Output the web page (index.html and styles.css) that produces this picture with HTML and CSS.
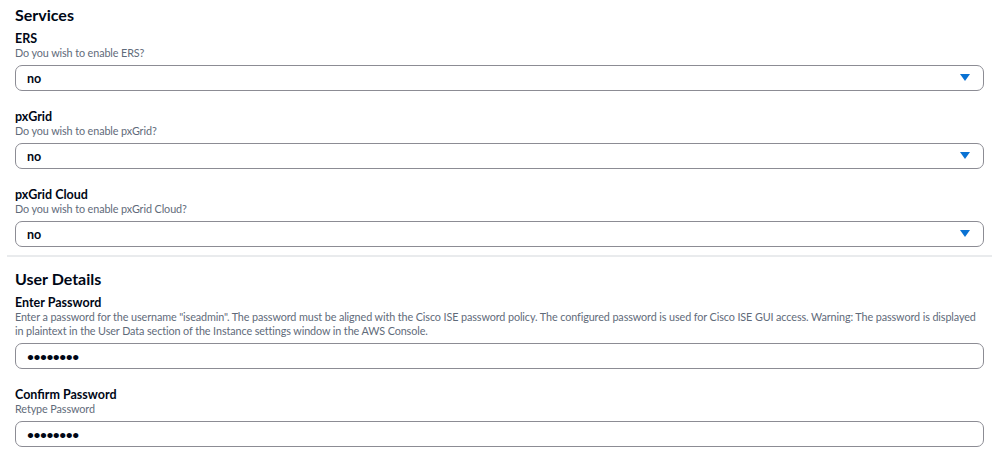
FILE: index.html
```html
<!doctype html>
<html lang="en">
<head>
    <meta charset="UTF-8">
    <title>Instance Settings</title>
    <link rel="stylesheet" href="styles.css">
</head>
<body>
    <div id='contents'>

        <div class='section'>
            <h2 class='sectionTitle'>Services</h2>

            <div class='field'>
                <div class='fieldLabel'>ERS</div>
                <div class='fieldHint'>Do you wish to enable ERS?</div>
                <div class='selectBox'>
                    <span class='selectValue'>no</span>
                    <svg class='caret' width='10' height='8' viewBox='0 0 10 8'><path d='M0 0 H10 L5 7 Z' fill='#0972d3'/></svg>
                </div>
            </div>

            <div class='field'>
                <div class='fieldLabel'>pxGrid</div>
                <div class='fieldHint'>Do you wish to enable pxGrid?</div>
                <div class='selectBox'>
                    <span class='selectValue'>no</span>
                    <svg class='caret' width='10' height='8' viewBox='0 0 10 8'><path d='M0 0 H10 L5 7 Z' fill='#0972d3'/></svg>
                </div>
            </div>

            <div class='field'>
                <div class='fieldLabel'>pxGrid Cloud</div>
                <div class='fieldHint'>Do you wish to enable pxGrid Cloud?</div>
                <div class='selectBox'>
                    <span class='selectValue'>no</span>
                    <svg class='caret' width='10' height='8' viewBox='0 0 10 8'><path d='M0 0 H10 L5 7 Z' fill='#0972d3'/></svg>
                </div>
            </div>
        </div>

        <div class='section divided'>
            <h2 class='sectionTitle'>User Details</h2>

            <div class='field'>
                <div class='fieldLabel'>Enter Password</div>
                <div class='fieldHint'>Enter a password for the username "iseadmin". The password must be aligned with the Cisco ISE password policy. The configured password is used for Cisco ISE GUI access. Warning: The password is displayed in plaintext in the User Data section of the Instance settings window in the AWS Console.</div>
                <div class='inputBox'><span class='dots'>&bull;&bull;&bull;&bull;&bull;&bull;&bull;&bull;</span></div>
            </div>

            <div class='field'>
                <div class='fieldLabel'>Confirm Password</div>
                <div class='fieldHint'>Retype Password</div>
                <div class='inputBox'><span class='dots'>&bull;&bull;&bull;&bull;&bull;&bull;&bull;&bull;</span></div>
            </div>
        </div>

    </div>
</body>
</html>
```

FILE: styles.css
```css
body
{
    margin:           0;
    background-color: #fff;
    font-family:      Lato, "Open Sans", sans-serif;
    color:            #000716;
}

#contents
{
    padding:          0 6px 0 7px;
}

.section
{
    padding:          5px 8px 8px 8px;
}

.divided
{
    border-top:       2px solid #e9ebed;
    padding-top:      12px;
}

.sectionTitle
{
    margin:           0 0 6px 0;
    font-size:        16px;
    line-height:      20px;
    font-weight:      700;
}

.field
{
    margin-bottom:    18px;
}

.field:last-child
{
    margin-bottom:    0;
}

.fieldLabel
{
    font-size:        12.5px;
    line-height:      15px;
    font-weight:      700;
}

.fieldHint
{
    font-size:        10.8px;
    letter-spacing:   -0.1px;
    line-height:      14px;
    color:            #5f6b7a;
    margin-bottom:    5px;
}

.selectBox,
.inputBox
{
    box-sizing:       border-box;
    height:           26px;
    border:           1.5px solid #8c8c94;
    border-radius:    7px;
    display:          flex;
    align-items:      center;
    justify-content:  space-between;
    padding:          0 13px 0 11px;
    font-size:        12.5px;
}

.selectValue
{
    font-weight:      700;
}

.caret
{
    display:          block;
}

.dots
{
    font-size:        12px;
    letter-spacing:   -0.5px;
    font-weight:      700;
}
```
